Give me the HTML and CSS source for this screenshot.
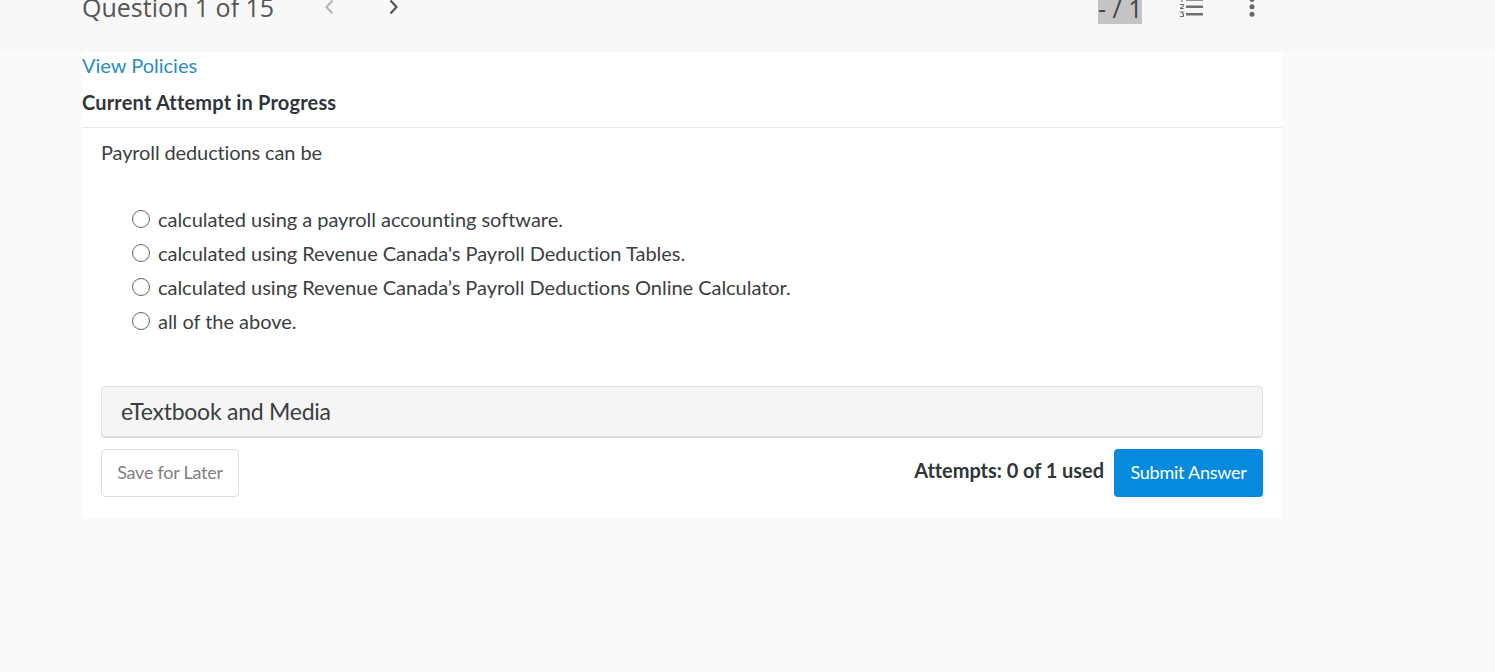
FILE: index.html
```html
<!DOCTYPE html>
<html lang="en">
<head>
<meta charset="utf-8">
<title>Question 1 of 15</title>
<link rel="stylesheet" href="styles.css">
</head>
<body>
<div class="page">
  <header class="topbar">
    <div class="topbar-left">
      <span class="q-title">Question 1 of 15</span>
      <svg class="chev chev-prev" width="12" height="24" viewBox="0 0 12 24"><path d="M9.500 0.500 3.500 7l6 6.500" fill="none" stroke="#b8b8b8" stroke-width="2.200"/></svg>
      <svg class="chev chev-next" width="12" height="24" viewBox="0 0 12 24"><path d="M2.500 0.500 8.500 7l-6 6.500" fill="none" stroke="#555" stroke-width="2.200"/></svg>
    </div>
    <div class="topbar-right">
      <span class="score">- / 1</span>
      <svg class="list-icon" width="25" height="24" viewBox="0 0 25 24">
        <path d="M7 -0.500h17M7 6.700h17M7 14.300h17" fill="none" stroke="#707070" stroke-width="2.400"/>
        <path d="M1 4.500h3.500v1.500L1 8.500h3.800M1 12h3.500L3 14h1.500v2.500H1M3 -2v4" fill="none" stroke="#666" stroke-width="1"/>
      </svg>
      <svg class="dots-icon" width="6" height="24" viewBox="0 0 6 24"><g fill="#666"><circle cx="3" cy="-0.500" r="2.500"/><circle cx="3" cy="6.700" r="2.500"/><circle cx="3" cy="14.300" r="2.500"/></g></svg>
    </div>
  </header>

  <main class="card">
    <div class="card-head">
      <a class="policies" href="#">View Policies</a>
      <h2 class="attempt-title">Current Attempt in Progress</h2>
    </div>
    <div class="card-body">
      <p class="prompt">Payroll deductions can be</p>
      <ul class="options">
        <li class="option"><span class="radio"></span><span>calculated using a payroll accounting software.</span></li>
        <li class="option"><span class="radio"></span><span>calculated using Revenue Canada's Payroll Deduction Tables.</span></li>
        <li class="option"><span class="radio"></span><span>calculated using Revenue Canada’s Payroll Deductions Online Calculator.</span></li>
        <li class="option"><span class="radio"></span><span>all of the above.</span></li>
      </ul>
      <div class="media-panel">eTextbook and Media</div>
      <div class="actions">
        <button class="btn btn-save" type="button">Save for Later</button>
        <div class="actions-right">
          <span class="attempts">Attempts: 0 of 1 used</span>
          <button class="btn btn-submit" type="button">Submit Answer</button>
        </div>
      </div>
    </div>
  </main>
</div>
</body>
</html>
```
FILE: styles.css
```css
* { box-sizing: border-box; }
html, body { margin: 0; height: 100%; overflow: hidden; }
body {
  background: #fafafa;
  font-family: "Lato", "Liberation Sans", sans-serif;
  color: #3a3f42;
}
.page { width: 1282px; padding-left: 82px; }

.topbar {
  height: 52px;
  margin-left: -82px;
  padding: 0 0 28px 82px;
  width: 1495px;
  background: #f8f8f8;
  display: flex;
  align-items: flex-end;
}
.topbar-left { display: flex; align-items: flex-end; width: 1016px; }
.q-title {
  font-family: "Open Sans", "Liberation Sans", sans-serif;
  font-size: 25px;
  line-height: 32px;
  margin-bottom: 1px;
  color: #555;
  width: 241px;
  white-space: nowrap;
}
.chev { flex: none; }
.chev-next { margin-left: 53px; }
.topbar-right { display: flex; align-items: flex-end; }
.score {
  width: 44px;
  height: 32px;
  background: #c4c4c4;
  font-family: "Open Sans", "Liberation Sans", sans-serif;
  font-size: 25px;
  line-height: 32px;
  color: #444;
  white-space: nowrap;
  text-align: center;
}
.list-icon { margin-left: 37px; overflow: visible; }
.dots-icon { margin-left: 45px; overflow: visible; }

.card { background: #fff; width: 1200px; height: 466px; }
.card-head { height: 76px; border-bottom: 1px solid #e8e8e8; }
.policies {
  display: block;
  font-size: 20px;
  line-height: 26px;
  color: #2a8cc4;
  text-decoration: none;
}
.attempt-title {
  margin: 10px 0 0;
  font-size: 20px;
  line-height: 28px;
  font-weight: 700;
  letter-spacing: 0.18px;
  color: #2f3639;
}
.card-body { padding: 10px 19px 0; }
.prompt { margin: 0; font-size: 20px; line-height: 28px; letter-spacing: -0.12px; color: #3a3f42; }
.options { list-style: none; margin: 36px 0 0; padding: 0 0 0 31px; }
.option {
  display: flex;
  align-items: center;
  height: 34px;
  font-size: 20px;
  letter-spacing: -0.03px;
  color: #3a3f42;
}
.radio {
  width: 18px;
  height: 18px;
  margin-right: 8px;
  margin-top: -1px;
  border: 1.500px solid #666;
  border-radius: 50%;
  background: #fff;
  flex: none;
}
.media-panel {
  margin-top: 48px;
  height: 52px;
  padding-left: 19px;
  border: 1px solid #e0e0e0;
  border-bottom: 2px solid #dcdcdc;
  border-radius: 4px;
  background: #f5f5f5;
  font-size: 23px;
  letter-spacing: -0.25px;
  line-height: 48px;
  color: #3a3f42;
}
.actions { display: flex; justify-content: space-between; margin-top: 11px; }
.actions-right { display: flex; align-items: flex-start; gap: 10px; }
.attempts {
  font-size: 20px;
  line-height: 28px;
  font-weight: 700;
  letter-spacing: -0.05px;
  color: #2f3639;
  margin-top: 7px;
}
.btn {
  height: 48px;
  border-radius: 4px;
  font-family: "Lato", "Liberation Sans", sans-serif;
  font-size: 18px;
  letter-spacing: -0.25px;
  padding: 0 0 2px;
}
.btn-save { width: 138px; background: #fff; border: 1px solid #dcdcdc; color: #808080; }
.btn-submit { width: 149px; background: #068ade; border: 0; color: #fff; }
```
